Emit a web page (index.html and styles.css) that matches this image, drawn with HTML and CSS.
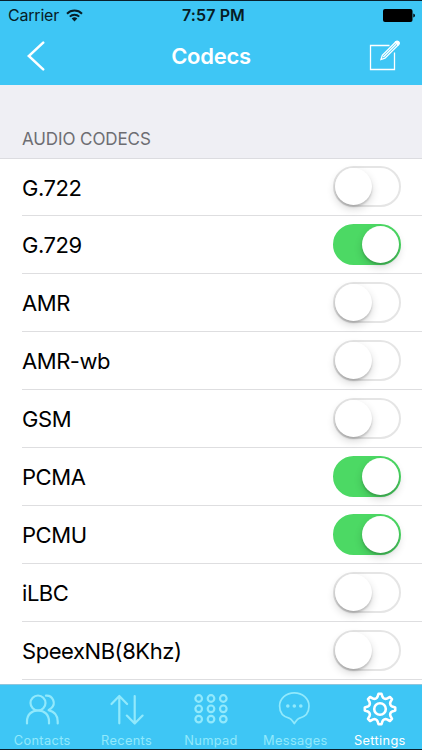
FILE: index.html
```
<!DOCTYPE html>
<html lang="en">
<head>
<meta charset="utf-8">
<title>Codecs</title>
<link rel="stylesheet" href="styles.css">
</head>
<body>
<div class="app">
  <header class="top">
    <div class="status">
      <div class="carrier"><span>Carrier</span>
        <svg width="17" height="13" viewBox="0 0 17 13"><g fill="none" stroke="#071d26" stroke-width="2"><path d="M1 4.700a10.600 10.600 0 0 1 15 0"/><path d="M3.800 7.600a6.700 6.700 0 0 1 9.400 0"/></g><path d="M5.700 9.500a4 4 0 0 1 5.600 0L8.500 12.400z" fill="#071d26"/></svg>
      </div>
      <span class="time">7:57 PM</span>
      <svg class="battery" width="32" height="13" viewBox="0 0 32 13"><rect width="29.500" height="13" rx="2"/><path d="M30.300 4.400q1.700.6 1.700 2.100t-1.700 2.100z"/></svg>
    </div>
    <div class="nav">
      <svg width="18" height="30" viewBox="0 0 18 30" fill="none" stroke="#fff" stroke-width="2.500" stroke-linecap="round"><path d="M16.200 1.700 1.800 15l14.400 13.300"/></svg>
      <h1>Codecs</h1>
      <svg width="32" height="32" viewBox="0 0 32 32" fill="none" stroke="#fff" stroke-width="1.300"><path d="M20.500 5.500H1.500v24h24V12.500"/><path d="m12 19.500 1.300-4.200L26.700 2l2.700 2.700L16 18.200z"/><path d="m14.300 17 13-13"/><path d="M26.300 2.200q1.600-2 3.300-.4t-.4 3.200z" fill="#fff"/></svg>
    </div>
  </header>
  <main>
    <h2><span>AUDIO CODECS</span></h2>
    <ul>
      <li><span>G.722</span><i class="switch"></i></li>
      <li><span>G.729</span><i class="switch on"></i></li>
      <li><span>AMR</span><i class="switch"></i></li>
      <li><span>AMR-wb</span><i class="switch"></i></li>
      <li><span>GSM</span><i class="switch"></i></li>
      <li><span>PCMA</span><i class="switch on"></i></li>
      <li><span>PCMU</span><i class="switch on"></i></li>
      <li><span>iLBC</span><i class="switch"></i></li>
      <li><span>SpeexNB(8Khz)</span><i class="switch"></i></li>
    </ul>
  </main>
  <nav class="tabs">
    <div class="tab"><svg width="36" height="36" viewBox="0 0 36 36"><circle cx="14" cy="12" r="7.500"/><path d="M3 32.500v-2c0-7 4.600-11 11-11s11 4 11 11v2M22 4.600a7.200 7.200 0 0 1 5 12.800l-2.400 1.700c5.700 1.400 9.100 5.200 9.100 11.400v2"/></svg><span>Contacts</span></div>
    <div class="tab"><svg width="36" height="36" viewBox="0 0 36 36"><path d="M10.300 32.300V5.200M2.500 13l7.800-8 7.800 8M25.700 5v27.500M17.800 24.600l7.900 8 7.900-8"/></svg><span>Recents</span></div>
    <div class="tab"><svg width="36" height="36" viewBox="0 0 36 36"><circle cx="5.700" cy="7.500" r="3.300"/><circle cx="18" cy="7.500" r="3.300"/><circle cx="30.300" cy="7.500" r="3.300"/><circle cx="5.700" cy="17.800" r="3.300"/><circle cx="18" cy="17.800" r="3.300"/><circle cx="30.300" cy="17.800" r="3.300"/><circle cx="5.700" cy="28.100" r="3.300"/><circle cx="18" cy="28.100" r="3.300"/><circle cx="30.300" cy="28.100" r="3.300"/></svg><span>Numpad</span></div>
    <div class="tab"><svg class="thin" width="36" height="36" viewBox="0 0 36 36"><path d="M17.300 1.800c-8.200 0-14.700 5.600-14.700 13.200 0 6.600 4 11 10 12.300 1.800.4 3.100 3 4.700 5.200 1.600-2.200 2.900-4.800 4.700-5.200 6-1.300 10-5.700 10-12.300 0-7.600-6.500-13.200-14.700-13.200z"/><g class="dots"><circle cx="10.800" cy="15" r="1.800"/><circle cx="17.300" cy="15" r="1.800"/><circle cx="23.800" cy="15" r="1.800"/></g></svg><span>Messages</span></div>
    <div class="tab active"><svg width="36" height="36" viewBox="0 0 36 36"><circle cx="18" cy="18" r="5.800"/><path d="M15.500 5.800 16.500 2.800h3l1 3q.5 1.300 1.800 1.800t2.600 0l3-1.600 2.100 2.100-1.600 3q-.6 1.300 0 2.600t1.800 1.800l3 1v3l-3 1q-1.300.5-1.800 1.800t0 2.600l1.600 3-2.100 2.100-3-1.600q-1.300-.6-2.600 0t-1.800 1.800l-1 3h-3l-1-3q-.5-1.300-1.800-1.800t-2.600 0l-3 1.600L6 27.900l1.600-3q.6-1.300 0-2.600t-1.800-1.800l-3-1v-3l3-1q1.300-.5 1.800-1.800t0-2.600l-1.600-3L8.100 6l3 1.600q1.300.6 2.600 0t1.800-1.800z"/></svg><span>Settings</span></div>
  </nav>
</div>
</body>
</html>
```
FILE: styles.css
```
* { box-sizing: border-box; }
body { margin: 0; font-family: Inter, "Liberation Sans", sans-serif; }
svg { display: block; flex: none; }
.app { width: 422px; height: 750px; display: flex; flex-direction: column; overflow: hidden; background: #fff; border-top: 1px solid #09202d; border-bottom: 1px solid #09202d; }
.top { height: 84px; flex: none; background: #3ec6f5; }
.status { height: 28px; display: grid; grid-template-columns: 1fr auto 1fr; align-items: center; padding: 0 8px; color: #071d26; font-size: 16px; }
.carrier { display: flex; align-items: center; gap: 7px; letter-spacing: -.2px; }
.time { font-weight: 600; letter-spacing: .1px; padding-left: 5px; }
.battery { justify-self: end; fill: #000; margin-right: -1px; }
.nav { height: 56px; display: grid; grid-template-columns: 1fr auto 1fr; align-items: center; padding: 0 21px 2px 27px; color: #fff; }
.nav h1 { margin: 0; font-size: 22px; font-weight: 600; line-height: 28px; letter-spacing: -.25px; padding-right: 6px; }
.nav svg:last-child { justify-self: end; }
main { flex: 1; min-height: 0; overflow: hidden; }
h2 { height: 74px; margin: 0; padding: 43px 22px 0; background: #efeff4; border-bottom: 1px solid #dcdce0; color: #6d6d72; font-size: 17px; line-height: 22px; font-weight: 400; letter-spacing: -.1px; }
ul { margin: 0 0 0 22px; padding: 0; list-style: none; }
li { height: 58px; display: flex; align-items: center; justify-content: space-between; padding: 1px 21px 0 0; border-bottom: 1px solid #dedee0; color: #000; font-size: 22px; letter-spacing: -.45px; }
li:first-child { height: 57px; }
.switch { width: 68px; height: 41px; border: 2px solid #e5e5e5; border-radius: 21px; display: flex; align-items: center; margin-bottom: 2px; }
.switch::before { content: ""; width: 37px; height: 37px; border-radius: 50%; background: #fff; box-shadow: 0 4px 8px rgba(0,0,0,.16), 0 2px 2px rgba(0,0,0,.16); }
.switch.on { background: #4cd964; border-color: #4cd964; justify-content: flex-end; }
.tabs { height: 65px; flex: none; display: grid; grid-template-columns: repeat(5, 1fr); background: #3ec6f5; border-top: 1px solid #8fc5dc; }
.tab { display: flex; flex-direction: column; align-items: center; padding-top: 6px; color: #91e9fc; font-size: 12.800px; line-height: 18px; letter-spacing: .35px; }
.tab span { margin-top: 5px; }
.tab svg { fill: none; stroke: currentColor; stroke-width: 2.200; stroke-linecap: round; stroke-linejoin: round; }
.tab svg.thin { stroke-width: 1.700px; }
.tab .dots { fill: currentColor; stroke: none; }
.tab.active { color: #fff; }
.tab.active svg { stroke-width: 2.600; }
```
